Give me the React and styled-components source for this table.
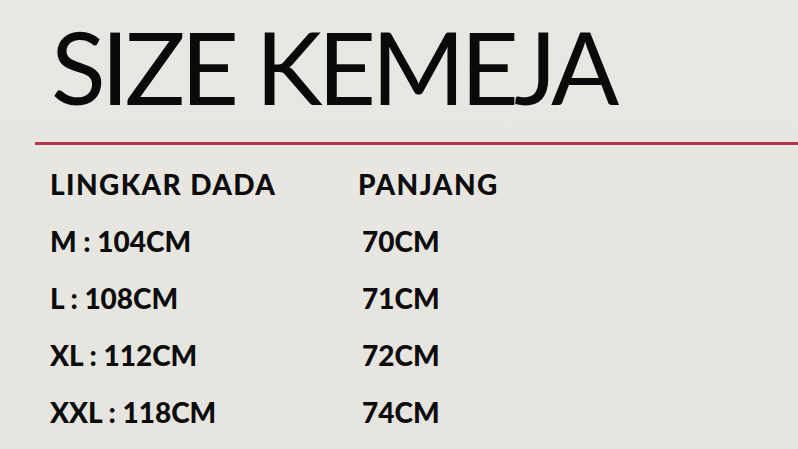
import React from "react";
import styled, { createGlobalStyle } from "styled-components";

const Global = createGlobalStyle`
  html, body { margin: 0; padding: 0; }
  body { background: #e7e5e0; }
`;

const Slide = styled.div`
  width: 798px;
  height: 449px;
  overflow: hidden;
  background: linear-gradient(180deg, #e9e7e2 0%, #e6e4df 100%);
  font-family: Lato, "Open Sans", sans-serif;
  color: #0c0c0c;
  display: flex;
  flex-direction: column;
`;

const Title = styled.h1`
  margin: 16px 0 0 0;
  padding-left: 51px;
  font-family: Lato, sans-serif;
  font-weight: 400;
  font-size: 101px;
  line-height: 100px;
  letter-spacing: -4.7px;
  color: #0a0a0a;
`;

const Rule = styled.div`
  margin: 26px 0 0 35px;
  height: 3px;
  background: #b73550;
`;

const Table = styled.div`
  margin-top: 11px;
  padding-left: 50px;
  display: grid;
  grid-template-columns: 308px auto;
  grid-auto-rows: 57px;
`;

const Cell = styled.div`
  font-family: Lato, sans-serif;
  font-weight: 900;
  font-size: 28px;
  line-height: 57px;
  letter-spacing: ${(p) => (p.$head ? "1.4px" : "0")};
  white-space: nowrap;
  padding-left: ${(p) => (p.$value ? "4px" : "0")};
`;

const rows = [
  ["M : 104CM", "70CM"],
  ["L : 108CM", "71CM"],
  ["XL : 112CM", "72CM"],
  ["XXL : 118CM", "74CM"],
];

export default function App() {
  return (
    <Slide>
      <Global />
      <Title>SIZE KEMEJA</Title>
      <Rule />
      <Table>
        <Cell $head>LINGKAR DADA</Cell>
        <Cell $head>PANJANG</Cell>
        {rows.map(([a, b]) => (
          <React.Fragment key={a}>
            <Cell>{a}</Cell>
            <Cell $value>{b}</Cell>
          </React.Fragment>
        ))}
      </Table>
    </Slide>
  );
}
